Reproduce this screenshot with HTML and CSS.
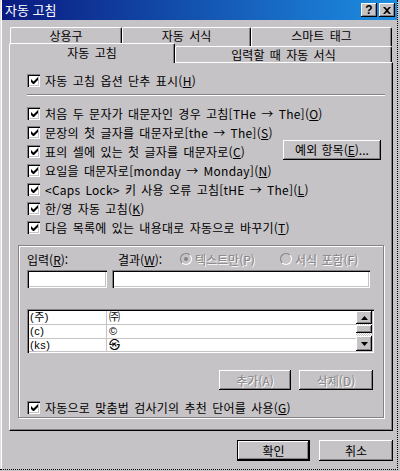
FILE: index.html
```html
<!DOCTYPE html>
<html lang="ko">
<head>
    <meta charset="UTF-8">
    <title>자동 고침</title>
    <link rel="stylesheet" href="styles.css">
</head>
<body>

<div class="window">
    <div class="titlebar">
        <span class="title">자동 고침</span>
        <div class="caption-buttons">
            <span class="cbtn">?</span>
            <span class="cbtn">
                <svg width="8" height="7" viewBox="0 0 8 7"><path d="M0 0h2l2 2 2-2h2L5 3.5 8 7H6L4 5 2 7H0l3-3.5z" fill="#000"/></svg>
            </span>
        </div>
    </div>

    <div class="tabs">
        <div class="tab-row back">
            <div class="tab tab-a">상용구</div>
            <div class="tab tab-b">자동 서식</div>
            <div class="tab tab-c">스마트 태그</div>
        </div>
        <div class="tab-row front">
            <div class="tab tab-d active">자동 고침</div>
            <div class="tab tab-e">입력할 때 자동 서식</div>
        </div>
    </div>

    <div class="panel">
        <div class="option first">
            <span class="check"><svg width="7" height="7" viewBox="0 0 7 7"><path d="M0 2v3l2 2h1l4-4V0L2.5 4.5z" fill="#000"/></svg></span>
            <span>자동 고침 옵션 단추 표시(<u>H</u>)</span>
        </div>

        <div class="separator"></div>

        <div class="options">
            <div class="option">
                <span class="check"><svg width="7" height="7" viewBox="0 0 7 7"><path d="M0 2v3l2 2h1l4-4V0L2.5 4.5z" fill="#000"/></svg></span>
                <span>처음 두 문자가 대문자인 경우 고침[THe → The](<u>O</u>)</span>
            </div>
            <div class="option">
                <span class="check"><svg width="7" height="7" viewBox="0 0 7 7"><path d="M0 2v3l2 2h1l4-4V0L2.5 4.5z" fill="#000"/></svg></span>
                <span>문장의 첫 글자를 대문자로[the → The](<u>S</u>)</span>
            </div>
            <div class="option">
                <span class="check"><svg width="7" height="7" viewBox="0 0 7 7"><path d="M0 2v3l2 2h1l4-4V0L2.5 4.5z" fill="#000"/></svg></span>
                <span>표의 셀에 있는 첫 글자를 대문자로(<u>C</u>)</span>
                <span class="button exceptions">예외 항목(<u>E</u>)...</span>
            </div>
            <div class="option">
                <span class="check"><svg width="7" height="7" viewBox="0 0 7 7"><path d="M0 2v3l2 2h1l4-4V0L2.5 4.5z" fill="#000"/></svg></span>
                <span>요일을 대문자로[monday → Monday](<u>N</u>)</span>
            </div>
            <div class="option">
                <span class="check"><svg width="7" height="7" viewBox="0 0 7 7"><path d="M0 2v3l2 2h1l4-4V0L2.5 4.5z" fill="#000"/></svg></span>
                <span>&lt;Caps Lock&gt; 키 사용 오류 고침[tHE → The](<u>L</u>)</span>
            </div>
            <div class="option">
                <span class="check"><svg width="7" height="7" viewBox="0 0 7 7"><path d="M0 2v3l2 2h1l4-4V0L2.5 4.5z" fill="#000"/></svg></span>
                <span>한/영 자동 고침(<u>K</u>)</span>
            </div>
            <div class="option">
                <span class="check"><svg width="7" height="7" viewBox="0 0 7 7"><path d="M0 2v3l2 2h1l4-4V0L2.5 4.5z" fill="#000"/></svg></span>
                <span>다음 목록에 있는 내용대로 자동으로 바꾸기(<u>T</u>)</span>
            </div>
        </div>

        <div class="group">
            <div class="field-labels">
                <span class="label-in">입력(<u>R</u>):</span>
                <span class="label-out">결과(<u>W</u>):</span>
                <span class="radio-item first-radio"><span class="radio on"></span><span class="disabled">텍스트만(P)</span></span>
                <span class="radio-item"><span class="radio"></span><span class="disabled">서식 포함(F)</span></span>
            </div>

            <div class="fields">
                <div class="field field-in"></div>
                <div class="field field-out"></div>
            </div>

            <div class="list">
                <div class="list-rows">
                    <div class="list-row"><span class="col-in">(주)</span><span class="col-out">㈜</span></div>
                    <div class="list-row"><span class="col-in">(c)</span><span class="col-out">©</span></div>
                    <div class="list-row"><span class="col-in">(ks)</span><span class="col-out">㉿</span></div>
                </div>
                <div class="scrollbar">
                    <span class="sbtn"><svg width="7" height="4" viewBox="0 0 7 4"><path d="M3.5 0L7 4H0z" fill="#000"/></svg></span>
                    <span class="thumb"></span>
                    <span class="sbtn"><svg width="7" height="4" viewBox="0 0 7 4"><path d="M0 0h7L3.5 4z" fill="#000"/></svg></span>
                </div>
            </div>

            <div class="list-buttons">
                <span class="button disabled-btn add">추가(A)</span>
                <span class="button disabled-btn remove">삭제(D)</span>
            </div>

            <div class="option last">
                <span class="check"><svg width="7" height="7" viewBox="0 0 7 7"><path d="M0 2v3l2 2h1l4-4V0L2.5 4.5z" fill="#000"/></svg></span>
                <span>자동으로 맞춤법 검사기의 추천 단어를 사용(<u>G</u>)</span>
            </div>
        </div>
    </div>

    <div class="footer">
        <span class="button default">확인</span>
        <span class="button cancel">취소</span>
    </div>
</div>

</body>
</html>
```

FILE: styles.css
```css
body {
    margin: 0;
    padding: 0;
    background: #c6c3c6;
    font-family: 'Noto Sans CJK KR', 'DejaVu Sans', sans-serif;
    font-size: 12px;
    color: #000;
}
u {
    text-decoration: underline;
    text-underline-offset: 1px;
}
.window {
    width: 398px;
    height: 470px;
    box-sizing: border-box;
    background: #c6c3c6;
    border-right: 1px dotted #000;
    border-bottom: 1px dotted #000;
    box-shadow: inset 1px 0 #dedfde, inset 2px 0 #fff;
    overflow: hidden;
}
.titlebar {
    display: flex;
    align-items: center;
    height: 20px;
    margin-left: 2px;
    background: linear-gradient(to right, #0a1a80, #1d8ee2);
    color: #fff;
}
.title {
    padding-left: 3px;
    font-size: 13px;
    line-height: 20px;
}
.caption-buttons {
    display: flex;
    gap: 2px;
    margin-left: auto;
    margin-right: 2px;
}
.cbtn {
    display: flex;
    align-items: center;
    justify-content: center;
    width: 16px;
    height: 14px;
    box-sizing: border-box;
    background: #c6c3c6;
    color: #000;
    font-family: 'Liberation Sans', sans-serif;
    font-weight: bold;
    font-size: 12px;
    line-height: 14px;
    box-shadow: inset -1px -1px #000, inset 1px 1px #fff, inset -2px -2px #848284;
}

/* tabs */
.tabs {
    margin-top: 7px;
}
.tab-row {
    display: flex;
}
.tab-row.back {
    margin-left: 10px;
    height: 19px;
}
.tab-row.front {
    margin-left: 9px;
    height: 16px;
}
.tab {
    box-sizing: border-box;
    text-align: center;
    background: #c6c3c6;
    border-top: 1px solid #fff;
    border-left: 1px solid #fff;
    border-right: 1px solid #000;
    border-radius: 2px 2px 0 0;
    box-shadow: inset -1px 0 #848284;
    line-height: 16px;
    word-spacing: 2px;
}
.back .tab {
    height: 19px;
}
.tab-a { width: 112px; }
.tab-b { width: 129px; }
.tab-c { width: 141px; }
.tab-d { width: 166px; }
.tab-e { width: 217px; }
.front .tab {
    height: 16px;
    line-height: 15px;
}
.front .tab.active {
    position: relative;
    z-index: 1;
    height: 20px;
    margin-top: -3px;
    line-height: 18px;
}

/* panel */
.panel {
    margin-left: 9px;
    width: 384px;
    height: 369px;
    box-sizing: border-box;
    padding: 0 7px 0 17px;
    border-top: 1px solid #fff;
    border-left: 1px solid #fff;
    border-right: 1px solid #000;
    border-bottom: 1px solid #000;
    box-shadow: inset -1px -1px #848284;
}
.option {
    display: flex;
    align-items: center;
    height: 19px;
    white-space: nowrap;
    letter-spacing: 0.25px;
    word-spacing: 1.5px;
}
.option.first {
    margin-top: 8px;
}
.check {
    display: flex;
    align-items: center;
    justify-content: center;
    flex: none;
    width: 13px;
    height: 13px;
    box-sizing: border-box;
    margin-right: 5px;
    background: #fff;
    box-shadow: inset 1px 1px #848284, inset 2px 2px #000, inset -1px -1px #fff, inset -2px -2px #c6c3c6;
}
.check svg {
    margin-left: 1px;
}
.separator {
    margin-top: 4px;
    height: 1px;
    background: #848284;
    border-bottom: 1px solid #fff;
}
.options {
    margin-top: 8px;
}
.button {
    display: flex;
    align-items: center;
    justify-content: center;
    box-sizing: border-box;
    background: #c6c3c6;
    box-shadow: inset -1px -1px #000, inset 1px 1px #fff, inset -2px -2px #848284;
    white-space: nowrap;
    letter-spacing: 0;
    word-spacing: 1px;
}
.exceptions {
    margin-left: auto;
    margin-right: 4px;
    margin-top: -4px;
    width: 98px;
    height: 20px;
}

/* replace group */
.group {
    margin-top: 8px;
    margin-left: -9px;
    width: 366px;
    height: 173px;
    box-sizing: border-box;
    padding-left: 8px;
    border: 1px solid #848284;
    box-shadow: inset 1px 1px #fff, 1px 1px #fff;
}
.field-labels {
    display: flex;
    align-items: center;
    height: 14px;
    margin-top: 6px;
    white-space: nowrap;
    word-spacing: 1px;
}
.label-in { width: 91px; }
.label-out { width: 62px; }
.radio-item {
    display: flex;
    align-items: center;
    gap: 3px;
}
.first-radio { width: 100px; }
.radio {
    position: relative;
    width: 12px;
    height: 12px;
    box-sizing: border-box;
    border-radius: 50%;
    border: 1px solid #848284;
    border-right-color: #fff;
    border-bottom-color: #fff;
    background: #c6c3c6;
}
.radio.on::after {
    content: "";
    position: absolute;
    left: 3px;
    top: 3px;
    width: 4px;
    height: 4px;
    border-radius: 50%;
    background: #848284;
}
.disabled {
    color: #848284;
    text-shadow: 1px 1px #fff;
}
.fields {
    display: flex;
    gap: 5px;
    margin-top: 4px;
}
.field {
    height: 18px;
    box-sizing: border-box;
    background: #fff;
    box-shadow: inset 1px 1px #848284, inset 2px 2px #000, inset -1px -1px #fff, inset -2px -2px #c6c3c6;
}
.field-in { width: 80px; }
.field-out { width: 258px; }
.list {
    display: flex;
    margin-top: 21px;
    width: 347px;
    height: 44px;
    box-sizing: border-box;
    padding: 2px;
    background: #fff;
    box-shadow: inset 1px 1px #848284, inset 2px 2px #000, inset -1px -1px #fff, inset -2px -2px #c6c3c6;
}
.list-rows {
    flex: 1;
    font-family: 'Liberation Sans', 'Noto Sans CJK KR', sans-serif;
    font-size: 11px;
}
.list-row {
    display: flex;
    height: 13px;
    line-height: 13px;
    overflow: hidden;
    border-bottom: 1px solid #c6c3c6;
}
.list-row:last-child {
    border-bottom: none;
}
.col-in {
    width: 78px;
    padding-left: 1px;
    box-sizing: border-box;
    border-right: 1px solid #c6c3c6;
    letter-spacing: 0.5px;
}
.col-out {
    padding-left: 2px;
}
.scrollbar {
    display: flex;
    flex-direction: column;
    width: 16px;
    background: repeating-conic-gradient(#c6c3c6 0 25%, #fff 0 50%) 0 0 / 2px 2px;
}
.sbtn {
    display: flex;
    align-items: center;
    justify-content: center;
    height: 13px;
    background: #c6c3c6;
    box-shadow: inset -1px -1px #000, inset 1px 1px #fff, inset -2px -2px #848284;
}
.thumb {
    height: 8px;
    margin-top: 1px;
    background: #c6c3c6;
    box-shadow: inset -1px -1px #000, inset 1px 1px #fff, inset -2px -2px #848284;
}
.sbtn:last-child {
    margin-top: auto;
    height: 15px;
}
.list-buttons {
    display: flex;
    justify-content: flex-end;
    gap: 8px;
    margin-top: 17px;
    margin-right: 10px;
}
.disabled-btn {
    height: 20px;
    color: #848284;
    text-shadow: 1px 1px #fff;
}
.add { width: 72px; }
.remove { width: 74px; }
.option.last {
    margin-top: 8px;
}

/* footer */
.footer {
    display: flex;
    justify-content: flex-end;
    gap: 9px;
    margin-top: 9px;
    margin-left: 9px;
    width: 384px;
}
.footer .button {
    height: 21px;
    word-spacing: 0;
}
.default {
    width: 73px;
    border: 1px solid #000;
}
.cancel {
    width: 74px;
}
```
